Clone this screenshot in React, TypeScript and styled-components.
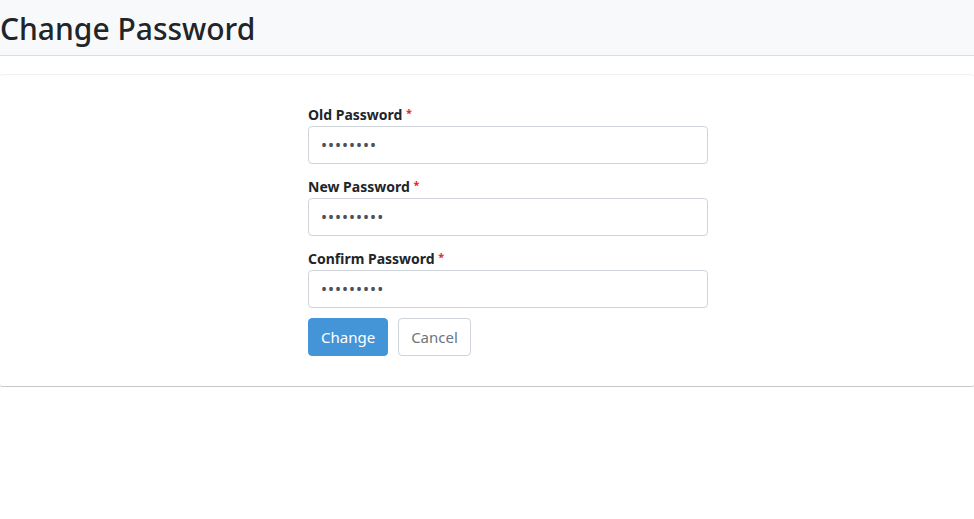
import React from 'react';
import styled, { createGlobalStyle } from 'styled-components';

const GlobalStyle = createGlobalStyle`
  body {
    margin: 0;
    background: #fff;
    font-family: "Noto Sans", "Open Sans", sans-serif;
    color: #212529;
  }
`;

interface FieldProps {
  label: string;
  dots: number;
}

const Field: React.FC<FieldProps> = ({ label, dots }) => (
  <FieldGroup>
    <Label>
      {label} <Required>*</Required>
    </Label>
    <Input type="password" defaultValue={'x'.repeat(dots)} />
  </FieldGroup>
);

const App: React.FC = () => (
  <div>
    <GlobalStyle />
    <PageHeader>
      <Title>Change Password</Title>
    </PageHeader>
    <Card>
      <Form>
        <Field label="Old Password" dots={8} />
        <Field label="New Password" dots={9} />
        <Field label="Confirm Password" dots={9} />
        <Actions>
          <Button primary>Change</Button>
          <Button>Cancel</Button>
        </Actions>
      </Form>
    </Card>
  </div>
);

export default App;

const PageHeader = styled.div`
  height: 55px;
  background: #f8f9fa;
  border-bottom: 1px solid #dcdde0;
  display: flex;
  align-items: center;
`;

const Title = styled.h1`
  margin: 0;
  font-size: 30px;
  font-weight: 500;
  line-height: 1;
  color: #212529;
  transform: translateY(1px);
`;

const Card = styled.div`
  margin-top: 18px;
  background: #fff;
  border-top: 1px solid #f0f0f2;
  border-bottom: 1px solid #c8c8c8;
  border-radius: 3px;
  box-shadow: 0 1px 1px rgba(0, 0, 0, 0.08);
  padding: 29px 0 30px 308px;
`;

const Form = styled.div`
  width: 400px;
`;

const FieldGroup = styled.div`
  margin-bottom: 12px;
`;

const Label = styled.label`
  display: block;
  font-size: 14px;
  font-weight: 700;
  line-height: 21px;
  margin-bottom: 1px;
  color: #212529;
`;

const Required = styled.span`
  color: #e3242b;
  font-size: 11px;
  vertical-align: top;
  line-height: 18px;
`;

const Input = styled.input`
  display: block;
  box-sizing: border-box;
  width: 100%;
  height: 38px;
  padding: 6px 12px;
  border: 1px solid #ced4da;
  border-radius: 4px;
  font-size: 16px;
  color: #495057;
  letter-spacing: 1px;
  font-family: inherit;
  outline: none;
`;

const Actions = styled.div`
  display: flex;
  gap: 10px;
  margin-top: -2px;
`;

const Button = styled.button<{ primary?: boolean }>`
  height: 38px;
  padding: 0 12px;
  border-radius: 4px;
  font-family: inherit;
  font-size: 15px;
  cursor: pointer;
  background: ${(p) => (p.primary ? '#4495d8' : '#fff')};
  color: ${(p) => (p.primary ? '#fff' : '#6c757d')};
  border: 1px solid ${(p) => (p.primary ? '#4495d8' : '#ced4da')};
`;
